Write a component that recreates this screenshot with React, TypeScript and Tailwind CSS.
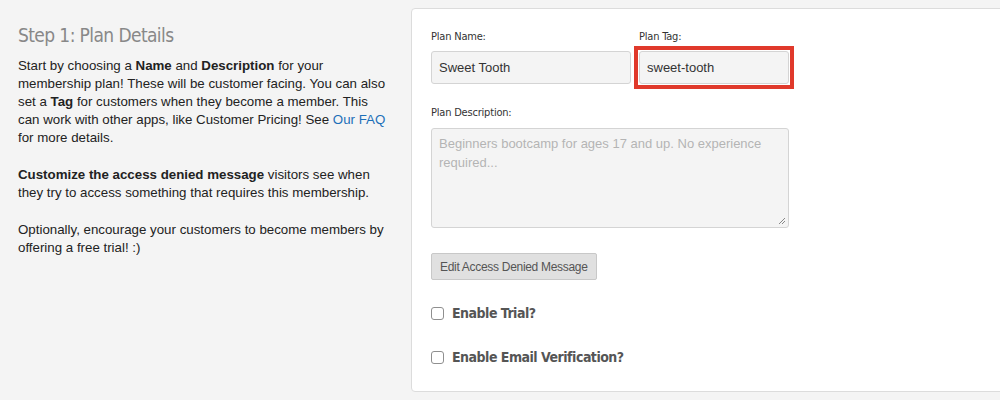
import React from "react"

const narrow = "font-['Liberation_Sans_Narrow','DejaVu_Sans',sans-serif] [font-stretch:condensed]"

function Checkbox({ label }: { label: string }) {
  return (
    <label className="flex items-center gap-[8px]">
      <span className="w-[13px] h-[13px] rounded-[3px] border border-[#8f8f8f] bg-white shrink-0" />
      <span className={`${narrow} text-[14px] font-bold text-[#555] leading-none tracking-[-0.5px]`}>{label}</span>
    </label>
  )
}

export default function App() {
  return (
    <div className="h-[400px] w-[1000px] overflow-hidden bg-[#f4f4f4] flex font-['Liberation_Sans',Arial,sans-serif]">
      <div className="w-[411px] shrink-0 pl-[18px] pr-[8px] pt-[22px]">
        <h2 className={`${narrow} text-[19px] leading-[26px] text-[#888] mb-[9px] tracking-[-0.6px]`}>Step 1: Plan Details</h2>
        <div className="text-[13.3px] leading-[18px] text-[#222]">
          <p className="mb-[19px]">
            Start by choosing a <b>Name</b> and <b>Description</b> for your
            <br />
            membership plan! These will be customer facing. You can also
            <br />
            set a <b>Tag</b> for customers when they become a member. This
            <br />
            can work with other apps, like Customer Pricing! See <a className="text-[#1c6fb8]">Our FAQ</a>
            <br />
            for more details.
          </p>
          <p className="mb-[19px]">
            <b>Customize the access denied message</b> visitors see when
            <br />
            they try to access something that requires this membership.
          </p>
          <p>
            Optionally, encourage your customers to become members by
            <br />
            offering a free trial! :)
          </p>
        </div>
      </div>

      <div className="mt-[8px] h-[384px] flex-1 mr-[-12px] bg-white border border-[#dcdcdc] rounded-[4px] pl-[19px] pt-[21px]">
        <div className="flex gap-[8px]">
          <div className="w-[200px]">
            <div className={`${narrow} text-[11px] text-[#333] leading-[14px] mb-[7px] tracking-[-0.2px]`}>Plan Name:</div>
            <div className="h-[33px] rounded-[3px] border border-[#d4d4d4] bg-[#f4f4f4] px-[7px] flex items-center text-[13px] text-[#333]">
              Sweet Tooth
            </div>
          </div>
          <div className="w-[150px]">
            <div className={`${narrow} text-[11px] text-[#333] leading-[14px] mb-[7px] tracking-[-0.2px]`}>Plan Tag:</div>
            <div className="relative h-[33px] rounded-[3px] border border-[#d4d4d4] bg-[#f4f4f4] px-[7px] flex items-center text-[13px] text-[#333]">
              sweet-tooth
              <span className="absolute -inset-[6px] border-[4px] border-[#e0392b] pointer-events-none" />
            </div>
          </div>
        </div>

        <div className={`${narrow} text-[11px] text-[#333] leading-[14px] mt-[22px] mb-[8px] tracking-[-0.2px]`}>Plan Description:</div>
        <div className="relative w-[358px] h-[100px] rounded-[3px] border border-[#d4d4d4] bg-[#f4f4f4] px-[7px] pt-[5px] text-[13px] leading-[19px] text-[#b4b4b4]">
          Beginners bootcamp for ages 17 and up. No experience required...
          <svg className="absolute right-[2px] bottom-[2px]" width="8" height="8" viewBox="0 0 8 8">
            <path d="M7 1 L1 7 M7 4 L4 7" stroke="#888" strokeWidth="1" />
          </svg>
        </div>

        <button className="mt-[25px] h-[27px] px-[8px] bg-[#e0e0e0] border border-[#c8c8c8] rounded-[2px] text-[12px] text-[#555] tracking-[-0.3px]">
          Edit Access Denied Message
        </button>

        <div className="mt-[26px] flex flex-col gap-[30px]">
          <Checkbox label="Enable Trial?" />
          <Checkbox label="Enable Email Verification?" />
        </div>
      </div>
    </div>
  )
}
